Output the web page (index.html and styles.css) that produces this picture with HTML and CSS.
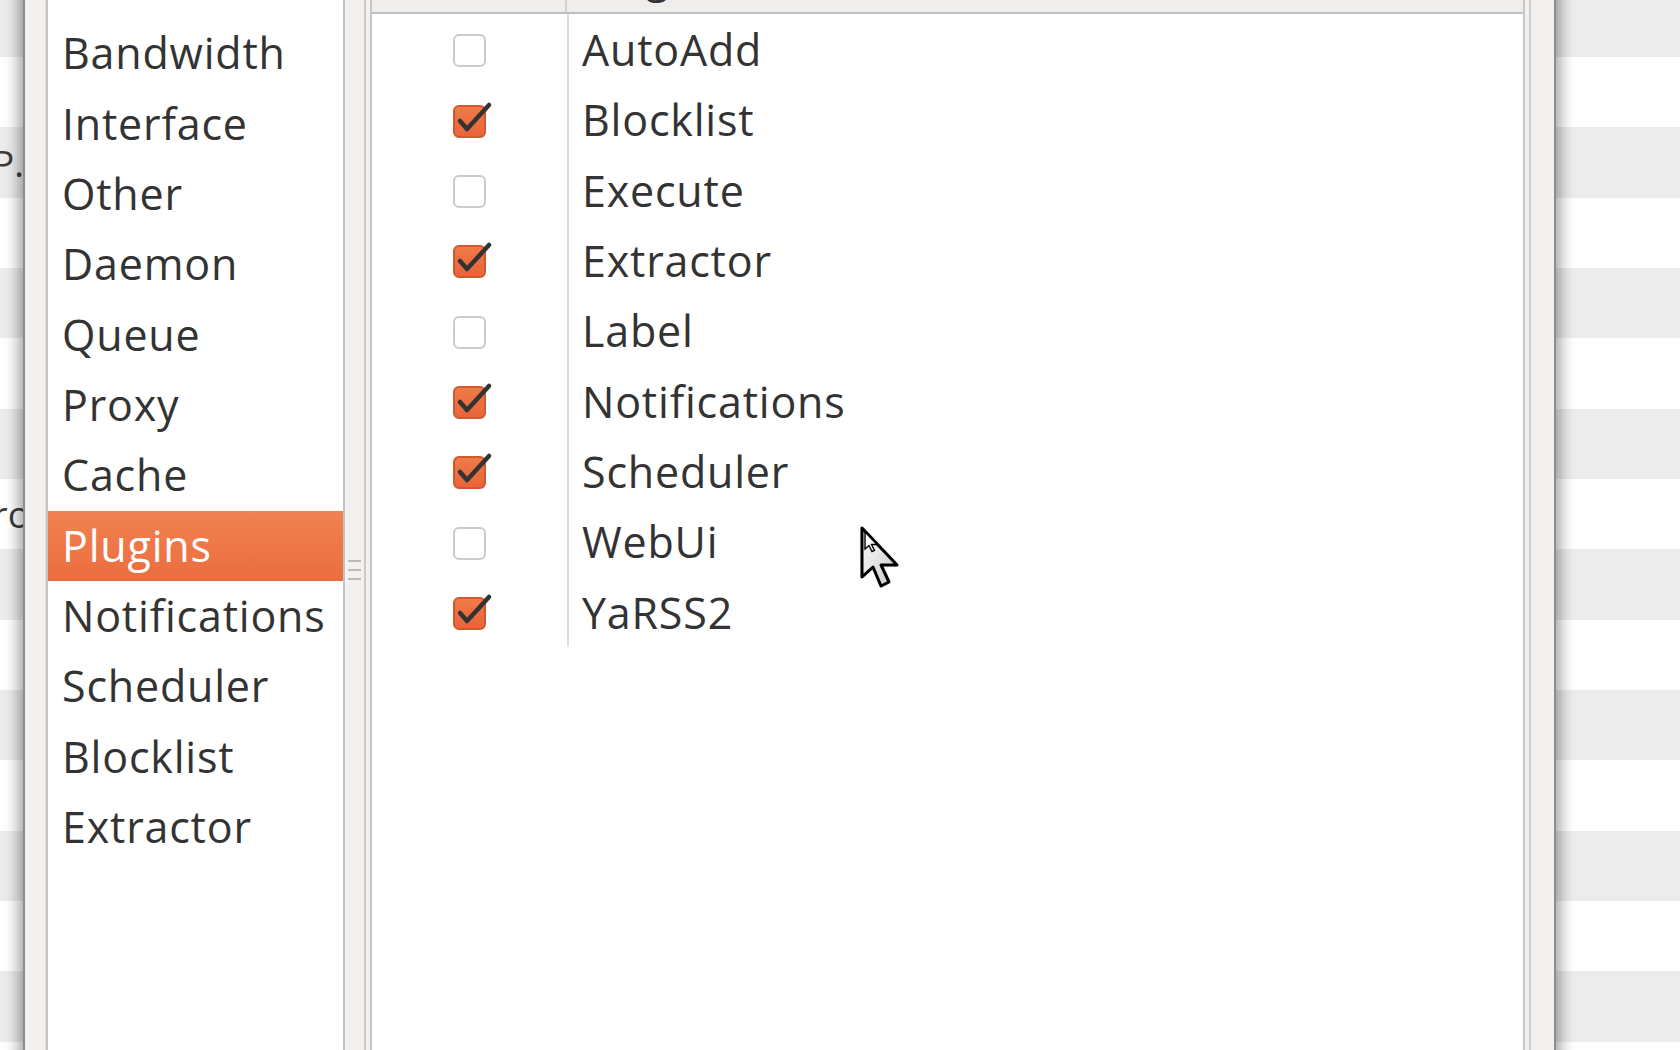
FILE: index.html
```html
<!DOCTYPE html>
<html lang="en">
<head>
<meta charset="utf-8">
<title>Preferences - Plugins</title>
<link rel="stylesheet" href="styles.css">
</head>
<body>
<div class="desktop">
  <div class="bg-row gray first"></div>
  <div class="bg-row white"></div>
  <div class="bg-row gray"><span class="bg-cell">Seeding P.</span></div>
  <div class="bg-row white"></div>
  <div class="bg-row gray"></div>
  <div class="bg-row white"></div>
  <div class="bg-row gray"></div>
  <div class="bg-row white"><span class="bg-cell tail">Erro</span></div>
  <div class="bg-row gray"></div>
  <div class="bg-row white"></div>
  <div class="bg-row gray"></div>
  <div class="bg-row white"></div>
  <div class="bg-row gray"></div>
  <div class="bg-row white"></div>
  <div class="bg-row gray"></div>
  <div class="bg-row white"></div>
</div>

<div class="dialog">
  <div class="categories">
    <div class="cat">Downloads</div>
    <div class="cat">Network</div>
    <div class="cat">Bandwidth</div>
    <div class="cat">Interface</div>
    <div class="cat">Other</div>
    <div class="cat">Daemon</div>
    <div class="cat">Queue</div>
    <div class="cat">Proxy</div>
    <div class="cat">Cache</div>
    <div class="cat selected">Plugins</div>
    <div class="cat">Notifications</div>
    <div class="cat">Scheduler</div>
    <div class="cat">Blocklist</div>
    <div class="cat">Extractor</div>
  </div>
  <div class="pane-handle">
    <div class="grip"><span></span><span></span><span></span></div>
  </div>
  <div class="plugins-frame">
    <div class="plugins-tree">
      <div class="tree-header">
        <div class="hcell col-enabled">Enabled</div>
        <div class="hcell col-name">Plugin</div>
      </div>
      <div class="tree-body">
        <div class="trow"><div class="cell col-enabled"><span class="check"></span></div><div class="cell col-name">AutoAdd</div></div>
        <div class="trow"><div class="cell col-enabled"><span class="check on"><svg viewBox="0 0 33 33" class="tick"><path d="M7 16 L14 24 L36 0"/></svg></span></div><div class="cell col-name">Blocklist</div></div>
        <div class="trow"><div class="cell col-enabled"><span class="check"></span></div><div class="cell col-name">Execute</div></div>
        <div class="trow"><div class="cell col-enabled"><span class="check on"><svg viewBox="0 0 33 33" class="tick"><path d="M7 16 L14 24 L36 0"/></svg></span></div><div class="cell col-name">Extractor</div></div>
        <div class="trow"><div class="cell col-enabled"><span class="check"></span></div><div class="cell col-name">Label</div></div>
        <div class="trow"><div class="cell col-enabled"><span class="check on"><svg viewBox="0 0 33 33" class="tick"><path d="M7 16 L14 24 L36 0"/></svg></span></div><div class="cell col-name">Notifications</div></div>
        <div class="trow"><div class="cell col-enabled"><span class="check on"><svg viewBox="0 0 33 33" class="tick"><path d="M7 16 L14 24 L36 0"/></svg></span></div><div class="cell col-name">Scheduler</div></div>
        <div class="trow"><div class="cell col-enabled"><span class="check"></span></div><div class="cell col-name">WebUi</div></div>
        <div class="trow"><div class="cell col-enabled"><span class="check on"><svg viewBox="0 0 33 33" class="tick"><path d="M7 16 L14 24 L36 0"/></svg></span></div><div class="cell col-name">YaRSS2</div></div>
      </div>
    </div>
  </div>
</div>

<svg class="cursor" width="44" height="66" viewBox="0 0 44 66">
  <defs>
    <linearGradient id="cfill" x1="0" y1="0" x2="1" y2="1">
      <stop offset="0" stop-color="#ffffff"/>
      <stop offset="1" stop-color="#c8c8c8"/>
    </linearGradient>
    <filter id="cblur" x="-20%" y="-20%" width="140%" height="140%">
      <feGaussianBlur stdDeviation="1.4"/>
    </filter>
  </defs>
  <path d="M3 3 L3 52 L14 42 L22 61 L30 57 L22 40 L38 40 Z" fill="#000" opacity="0.6" filter="url(#cblur)"/>
  <path d="M3 3 L3 52 L14 42 L22 61 L30 57 L22 40 L38 40 Z" fill="url(#cfill)" stroke="#000" stroke-width="3" stroke-linejoin="round"/>
  <path d="M6 7 L6 24 L10 20.5 L13 26.5 L15.5 25.5 L12.5 19.5 L18 19.5 Z" fill="#fff" stroke="#000" stroke-width="1.4"/>
</svg>
</body>
</html>
```
FILE: styles.css
```css
html, body {
  margin: 0;
  padding: 0;
}

body {
  width: 1680px;
  height: 1050px;
  overflow: hidden;
  position: relative;
  background: #ffffff;
  font-family: "Open Sans", "Noto Sans", "DejaVu Sans", sans-serif;
  color: #333333;
}

/* background application rows */
.desktop {
  display: flex;
  flex-direction: column;
}

.bg-row {
  height: 70.35px;
  flex: none;
  display: flex;
  align-items: center;
}

.bg-row.first {
  height: 57px;
}

.bg-row.gray {
  background: #ececec;
}

.bg-row.white {
  background: #ffffff;
}

.bg-cell {
  width: 24px;
  overflow: hidden;
  white-space: nowrap;
  display: flex;
  justify-content: flex-end;
  font-size: 37px;
  line-height: 44px;
  color: #3c3c3c;
}

.bg-cell.tail {
  width: 30px;
}

/* preferences dialog window */
.dialog {
  position: absolute;
  left: 25px;
  top: -124.35px;
  width: 1529px;
  height: 1389px;
  box-sizing: border-box;
  background: #f2f1f0;
  display: flex;
  padding: 0 23px 0 21px;
  box-shadow: 0 0 0 2px #8f8c89, 0 0 14px 6px rgba(0, 0, 0, 0.38);
}

.categories {
  width: 299px;
  flex: none;
  box-sizing: border-box;
  background: #ffffff;
  border: 2px solid #c6c4c2;
  box-shadow: -1px 0 0 #dddbd9;
  display: flex;
  flex-direction: column;
}

.cat {
  height: 70.35px;
  flex: none;
  box-sizing: border-box;
  padding: 1px 0 2px 14px;
  font-size: 43px;
  line-height: 67.35px;
  letter-spacing: 0.8px;
  white-space: nowrap;
  color: #333333;
}

.cat.selected {
  background: linear-gradient(to bottom, #f18253, #eb6d3e);
  color: #ffffff;
}

.pane-handle {
  width: 19px;
  flex: none;
  display: flex;
  align-items: center;
  justify-content: center;
}

.grip {
  display: flex;
  flex-direction: column;
  gap: 7px;
}

.grip span {
  display: block;
  width: 13px;
  height: 2px;
  background: #bdbbb9;
}

.plugins-frame {
  flex: 1;
  align-self: flex-start;
  margin-top: 64.35px;
  height: 1400px;
  box-sizing: border-box;
  border: 2px solid #cdcbc9;
  padding: 4px;
}

.plugins-tree {
  height: 100%;
  box-sizing: border-box;
  border: 2px solid #c9c7c5;
  background: #ffffff;
  display: flex;
  flex-direction: column;
}

.tree-header {
  height: 66px;
  flex: none;
  box-sizing: border-box;
  background: #efeeed;
  border-bottom: 2px solid #c0bebc;
  display: flex;
}

.hcell {
  font-size: 43px;
  line-height: 56px;
  letter-spacing: 0.8px;
  white-space: nowrap;
  box-sizing: border-box;
}

.hcell.col-enabled {
  width: 195px;
  flex: none;
  text-align: center;
  border-right: 2px solid #d4d2d0;
  margin: 6px 0 0 0;
}

.hcell.col-name {
  padding-left: 13px;
}

.tree-body {
  display: flex;
  flex-direction: column;
}

.trow {
  height: 70.35px;
  flex: none;
  display: flex;
}

.cell {
  box-sizing: border-box;
  font-size: 43px;
  line-height: 67.35px;
  letter-spacing: 0.8px;
  white-space: nowrap;
  color: #333333;
}

.cell.col-enabled {
  width: 195px;
  flex: none;
  display: flex;
  align-items: center;
  justify-content: center;
}

.cell.col-name {
  border-left: 2px solid #dcdcdc;
  padding: 2px 0 1px 13px;
}

.check {
  position: relative;
  width: 33px;
  height: 33px;
  box-sizing: border-box;
  border: 2px solid #cbcbcb;
  border-radius: 6px;
  background: #ffffff;
  margin-top: 3px;
}

.check.on {
  border: 2px solid #cf5a2d;
  background: linear-gradient(to bottom, #f07a48, #e9643a);
}

.tick {
  position: absolute;
  left: -2px;
  top: -2px;
  width: 33px;
  height: 33px;
  overflow: visible;
}

.tick path {
  fill: none;
  stroke: #333333;
  stroke-width: 4.5;
  stroke-linecap: round;
  stroke-linejoin: round;
}

.cursor {
  position: absolute;
  left: 859px;
  top: 525px;
}
```
